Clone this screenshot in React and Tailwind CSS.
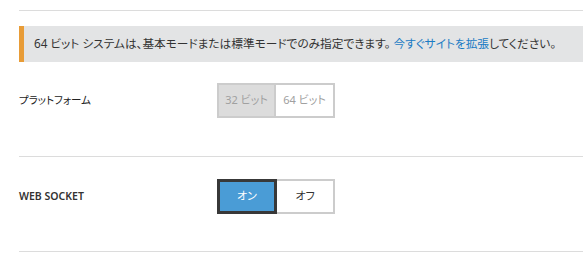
export default function App() {
    return (
        <div className="w-[583px] h-[259px] bg-white pl-[19px] pt-[10px] text-[#333] font-['Noto_Sans','Noto_Sans_CJK_JP',sans-serif] [font-feature-settings:'palt']">
            <div className="border-t border-[#dcdcdc]">
                <div className="mt-[15px] h-[36px] bg-[#e3e4e5] border-l-[5px] border-[#e89c37] flex items-center pl-[10px] text-[11.7px] whitespace-nowrap">
                    <span>
                        64 ビット システムは、基本モードまたは標準モードでのみ指定できます。{" "}
                        <a href="#" className="text-[#1a7bc4]">今すぐサイトを拡張</a>
                        してください。
                    </span>
                </div>
                <div className="flex items-center pt-[21px] pb-[38px]">
                    <div className="w-[198px] text-[10.5px] text-[#222]">プラットフォーム</div>
                    <div className="flex">
                        <button className="w-[59px] h-[35px] bg-[#dcdcdc] border-2 border-[#cccccc] text-[11px] text-[#a0a0a0]">32 ビット</button>
                        <button className="w-[59px] h-[35px] bg-white border-2 border-l-0 border-[#cccccc] text-[11px] text-[#a0a0a0]">64 ビット</button>
                    </div>
                </div>
            </div>
            <div className="border-t border-[#dcdcdc]">
                <div className="flex items-center pt-[22px] pb-[37px]">
                    <div className="w-[198px] text-[10.5px] font-semibold text-[#333]">WEB SOCKET</div>
                    <div className="flex">
                        <button className="w-[60px] h-[35px] bg-[#4a9cd6] border-[3px] border-[#383838] text-[11px] text-white">オン</button>
                        <button className="w-[58px] h-[35px] bg-white border-2 border-l-0 border-[#cccccc] text-[11px] text-[#333]">オフ</button>
                    </div>
                </div>
            </div>
            <div className="border-t border-[#dcdcdc]"></div>
        </div>
    );
}
